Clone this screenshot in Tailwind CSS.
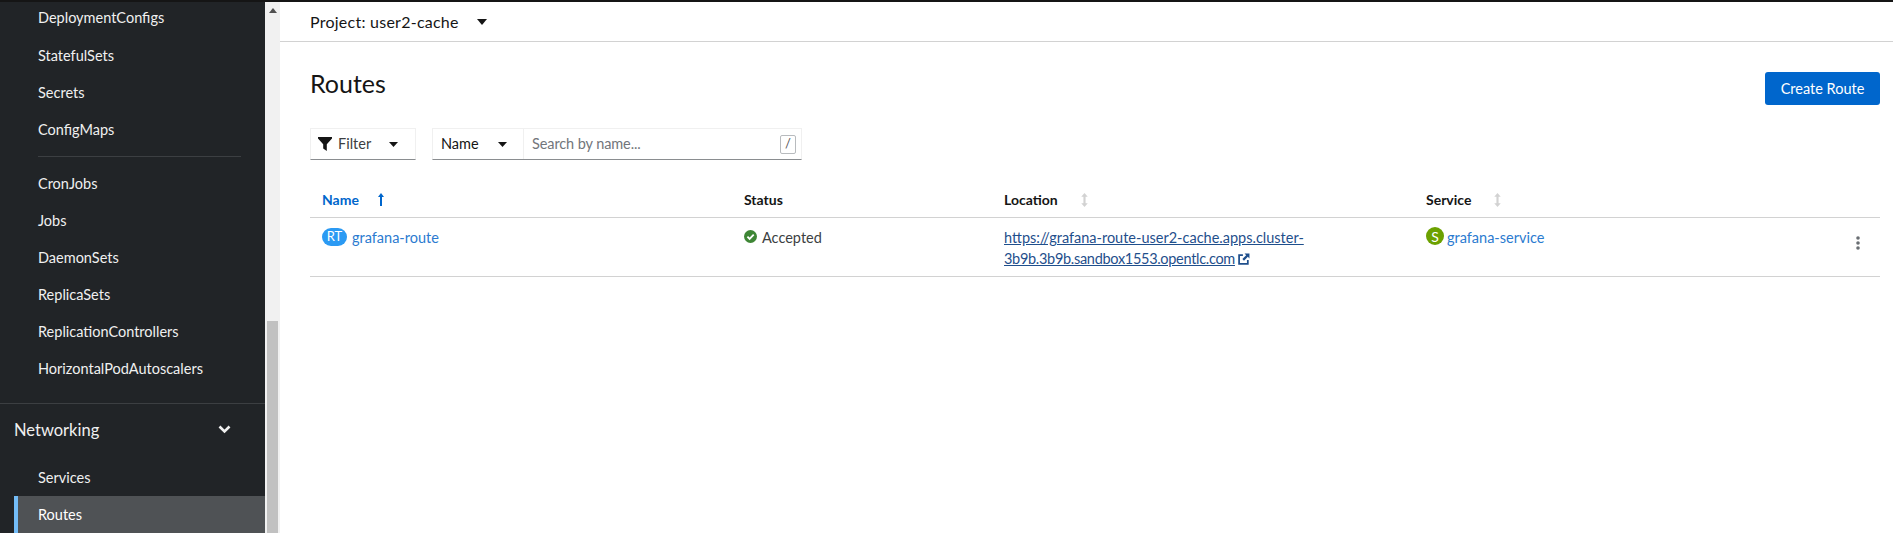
<!DOCTYPE html>
<html lang="en">
<head>
  <meta charset="UTF-8">
  <title>Routes</title>
  <script src="https://cdn.jsdelivr.net/npm/@tailwindcss/browser@4"></script>
</head>
<body class="bg-white font-['Lato',sans-serif] text-[14.5px] text-[#151515] overflow-hidden">
  <div class="h-[533px] flex flex-col overflow-hidden">
    <div class="h-[2px] bg-[#151515] shrink-0"></div>
    <div class="flex flex-1 min-h-0">
      <!-- sidebar -->
      <nav class="w-[265px] shrink-0 bg-[#212427] text-[#f0f0f0] overflow-hidden">
        <a class="h-[35px] pl-[38px] flex items-center pb-[3px]">DeploymentConfigs</a>
        <a class="h-[37px] pl-[38px] flex items-center">StatefulSets</a>
        <a class="h-[37px] pl-[38px] flex items-center">Secrets</a>
        <a class="h-[37px] pl-[38px] flex items-center">ConfigMaps</a>
        <div class="h-px bg-[#3c3f42] ml-[38px] mr-6 mt-[8px] mb-[8px]"></div>
        <a class="h-[37px] pl-[38px] flex items-center">CronJobs</a>
        <a class="h-[37px] pl-[38px] flex items-center">Jobs</a>
        <a class="h-[37px] pl-[38px] flex items-center">DaemonSets</a>
        <a class="h-[37px] pl-[38px] flex items-center">ReplicaSets</a>
        <a class="h-[37px] pl-[38px] flex items-center">ReplicationControllers</a>
        <a class="h-[37px] pl-[38px] flex items-center">HorizontalPodAutoscalers</a>
        <div class="h-px bg-[#3c3f42] mt-[16px]"></div>
        <div class="h-[52px] pl-[14px] pr-[34px] flex items-center justify-between text-[16.5px]">
          <span>Networking</span>
          <svg class="w-[13px] h-[10px] -mt-[3px]" viewBox="0 0 13 10"><path d="M1.5 2.5 6.5 7.5 11.5 2.5" fill="none" stroke="#f0f0f0" stroke-width="2.6"/></svg>
        </div>
        <div class="h-[3px]"></div>
        <a class="h-[37px] pl-[38px] flex items-center">Services</a>
        <div class="ml-[14px] h-[37px] pl-[20px] flex items-center bg-[#4f5255] border-l-[4px] border-[#73bcf7] text-white">Routes</div>
      </nav>

      <!-- scrollbar -->
      <div class="w-[15px] shrink-0 bg-[#f1f1f1] relative">
        <svg class="absolute left-[4px] top-[6px] w-[8px] h-[5px]" viewBox="0 0 8 5"><path d="M4 0 8 5H0Z" fill="#505050"/></svg>
        <div class="absolute left-[2px] top-[319px] bottom-0 w-[11px] bg-[#c1c1c1]"></div>
      </div>

      <!-- main -->
      <main class="flex-1 min-w-0 pr-[13px] flex flex-col">
        <div class="h-[40px] -mr-[13px] border-b border-[#d2d2d2] pl-[30px] flex items-center">
          <span class="text-[16px] tracking-[0.25px]">Project: user2-cache</span>
          <svg class="ml-[18px] w-[10px] h-[6px]" viewBox="0 0 10 6"><path d="M0 0H10L5 6Z" fill="#151515"/></svg>
        </div>

        <div class="pl-[30px] pt-[30px] flex items-start justify-between">
          <h1 class="text-[25px] leading-[29px] -mt-[3px]">Routes</h1>
          <button class="w-[115px] h-[33px] bg-[#0066cc] text-white rounded-[3px]">Create Route</button>
        </div>

        <div class="pl-[30px] mt-[23px] flex gap-[16px] h-[32px]">
          <div class="w-[106px] border border-[#f0f0f0] border-b-[#8a8d90] flex items-center pl-[7px]">
            <svg class="w-[14px] h-[14px]" viewBox="0 0 14 14"><path d="M0 0H14V1.6L8.8 7.2V14L5.2 11.5V7.2L0 1.6Z" fill="#151515"/></svg>
            <span class="ml-[6px] text-[#3c3f42]">Filter</span>
            <svg class="ml-[18px] w-[9px] h-[5px]" viewBox="0 0 9 5"><path d="M0 0H9L4.5 5Z" fill="#151515"/></svg>
          </div>
          <div class="w-[370px] flex border border-[#f0f0f0] border-b-[#8a8d90]">
            <div class="w-[91px] border-r border-[#f0f0f0] flex items-center pl-[8px]">
              <span>Name</span>
              <svg class="ml-[19px] w-[9px] h-[5px]" viewBox="0 0 9 5"><path d="M0 0H9L4.5 5Z" fill="#151515"/></svg>
            </div>
            <div class="flex-1 flex items-center justify-between pl-[8px] pr-[5px]">
              <span class="text-[#72767b] tracking-[-0.1px]">Search by name...</span>
              <span class="w-[16px] h-[19px] border border-[#b8bbbe] rounded-[2px] flex items-center justify-center text-[13px] text-[#555]">/</span>
            </div>
          </div>
        </div>

        <div class="ml-[30px] mt-[25px] h-[33px] border-b border-[#d2d2d2] flex font-bold text-[14px]">
          <div class="w-[434px] pl-[12px] text-[#0066cc] flex items-center h-[29px]">
            <span>Name</span>
            <svg class="ml-[19px] w-[6px] h-[13px]" viewBox="0 0 6 13"><path d="M3 0 6 4H4V13H2V4H0Z" fill="#0066cc"/></svg>
          </div>
          <div class="w-[260px] flex items-center h-[29px]">Status</div>
          <div class="w-[422px] flex items-center h-[29px]">
            <span>Location</span>
            <svg class="ml-[23px] w-[7px] h-[14px]" viewBox="0 0 6 13"><path d="M3 0 6 3.5H4V9.5H6L3 13 0 9.5H2V3.5H0Z" fill="#d2d2d2"/></svg>
          </div>
          <div class="flex items-center h-[29px]">
            <span>Service</span>
            <svg class="ml-[23px] w-[7px] h-[14px]" viewBox="0 0 6 13"><path d="M3 0 6 3.5H4V9.5H6L3 13 0 9.5H2V3.5H0Z" fill="#d2d2d2"/></svg>
          </div>
        </div>

        <div class="ml-[30px] h-[59px] border-b border-[#d2d2d2] flex relative">
          <div class="w-[434px] pl-[12px] pt-[9px] flex items-start">
            <span class="w-[25px] h-[18px] mt-[1px] rounded-full bg-[#2b9af3] text-white text-[13px] flex items-center justify-center">RT</span>
            <span class="ml-[5px] text-[#2b7bd0]">grafana-route</span>
          </div>
          <div class="w-[260px] pt-[9px] flex items-start">
            <svg class="w-[13px] h-[13px] mt-[3px]" viewBox="0 0 13 13"><circle cx="6.5" cy="6.5" r="6.5" fill="#3e8635"/><path d="M3.4 6.7 5.6 8.9 9.7 4.6" fill="none" stroke="#fff" stroke-width="1.8"/></svg>
            <span class="ml-[5px] text-[#3c3f42]">Accepted</span>
          </div>
          <div class="w-[422px] pt-[9px] leading-[21px] text-[#1f4f8c]">
            <a class="underline">https://grafana-route-user2-cache.apps.cluster-<br><span class="tracking-[-0.3px]">3b9b.3b9b.sandbox1553.opentlc.com</span></a><svg class="inline-block ml-[3px] w-[12px] h-[12px] align-[-1px]" viewBox="0 0 11 11"><path d="M4.5 2H1V10H9V6.5" fill="none" stroke="#1f4f8c" stroke-width="1.6"/><path d="M6 0.5H10.5V5L9 3.5 5.5 7 4 5.5 7.5 2Z" fill="#1f4f8c"/></svg>
          </div>
          <div class="pt-[9px] flex items-start">
            <span class="w-[18px] h-[18px] rounded-full bg-[#6ca100] text-white text-[14px] flex items-center justify-center">S</span>
            <span class="ml-[3px] text-[#2b7bd0]">grafana-service</span>
          </div>
          <svg class="absolute left-[1546px] top-[18px] w-[4px] h-[14px]" viewBox="0 0 4 14"><circle cx="2" cy="2" r="1.8" fill="#6a6e73"/><circle cx="2" cy="7" r="1.8" fill="#6a6e73"/><circle cx="2" cy="12" r="1.8" fill="#6a6e73"/></svg>
        </div>
      </main>
    </div>
  </div>
</body>
</html>
